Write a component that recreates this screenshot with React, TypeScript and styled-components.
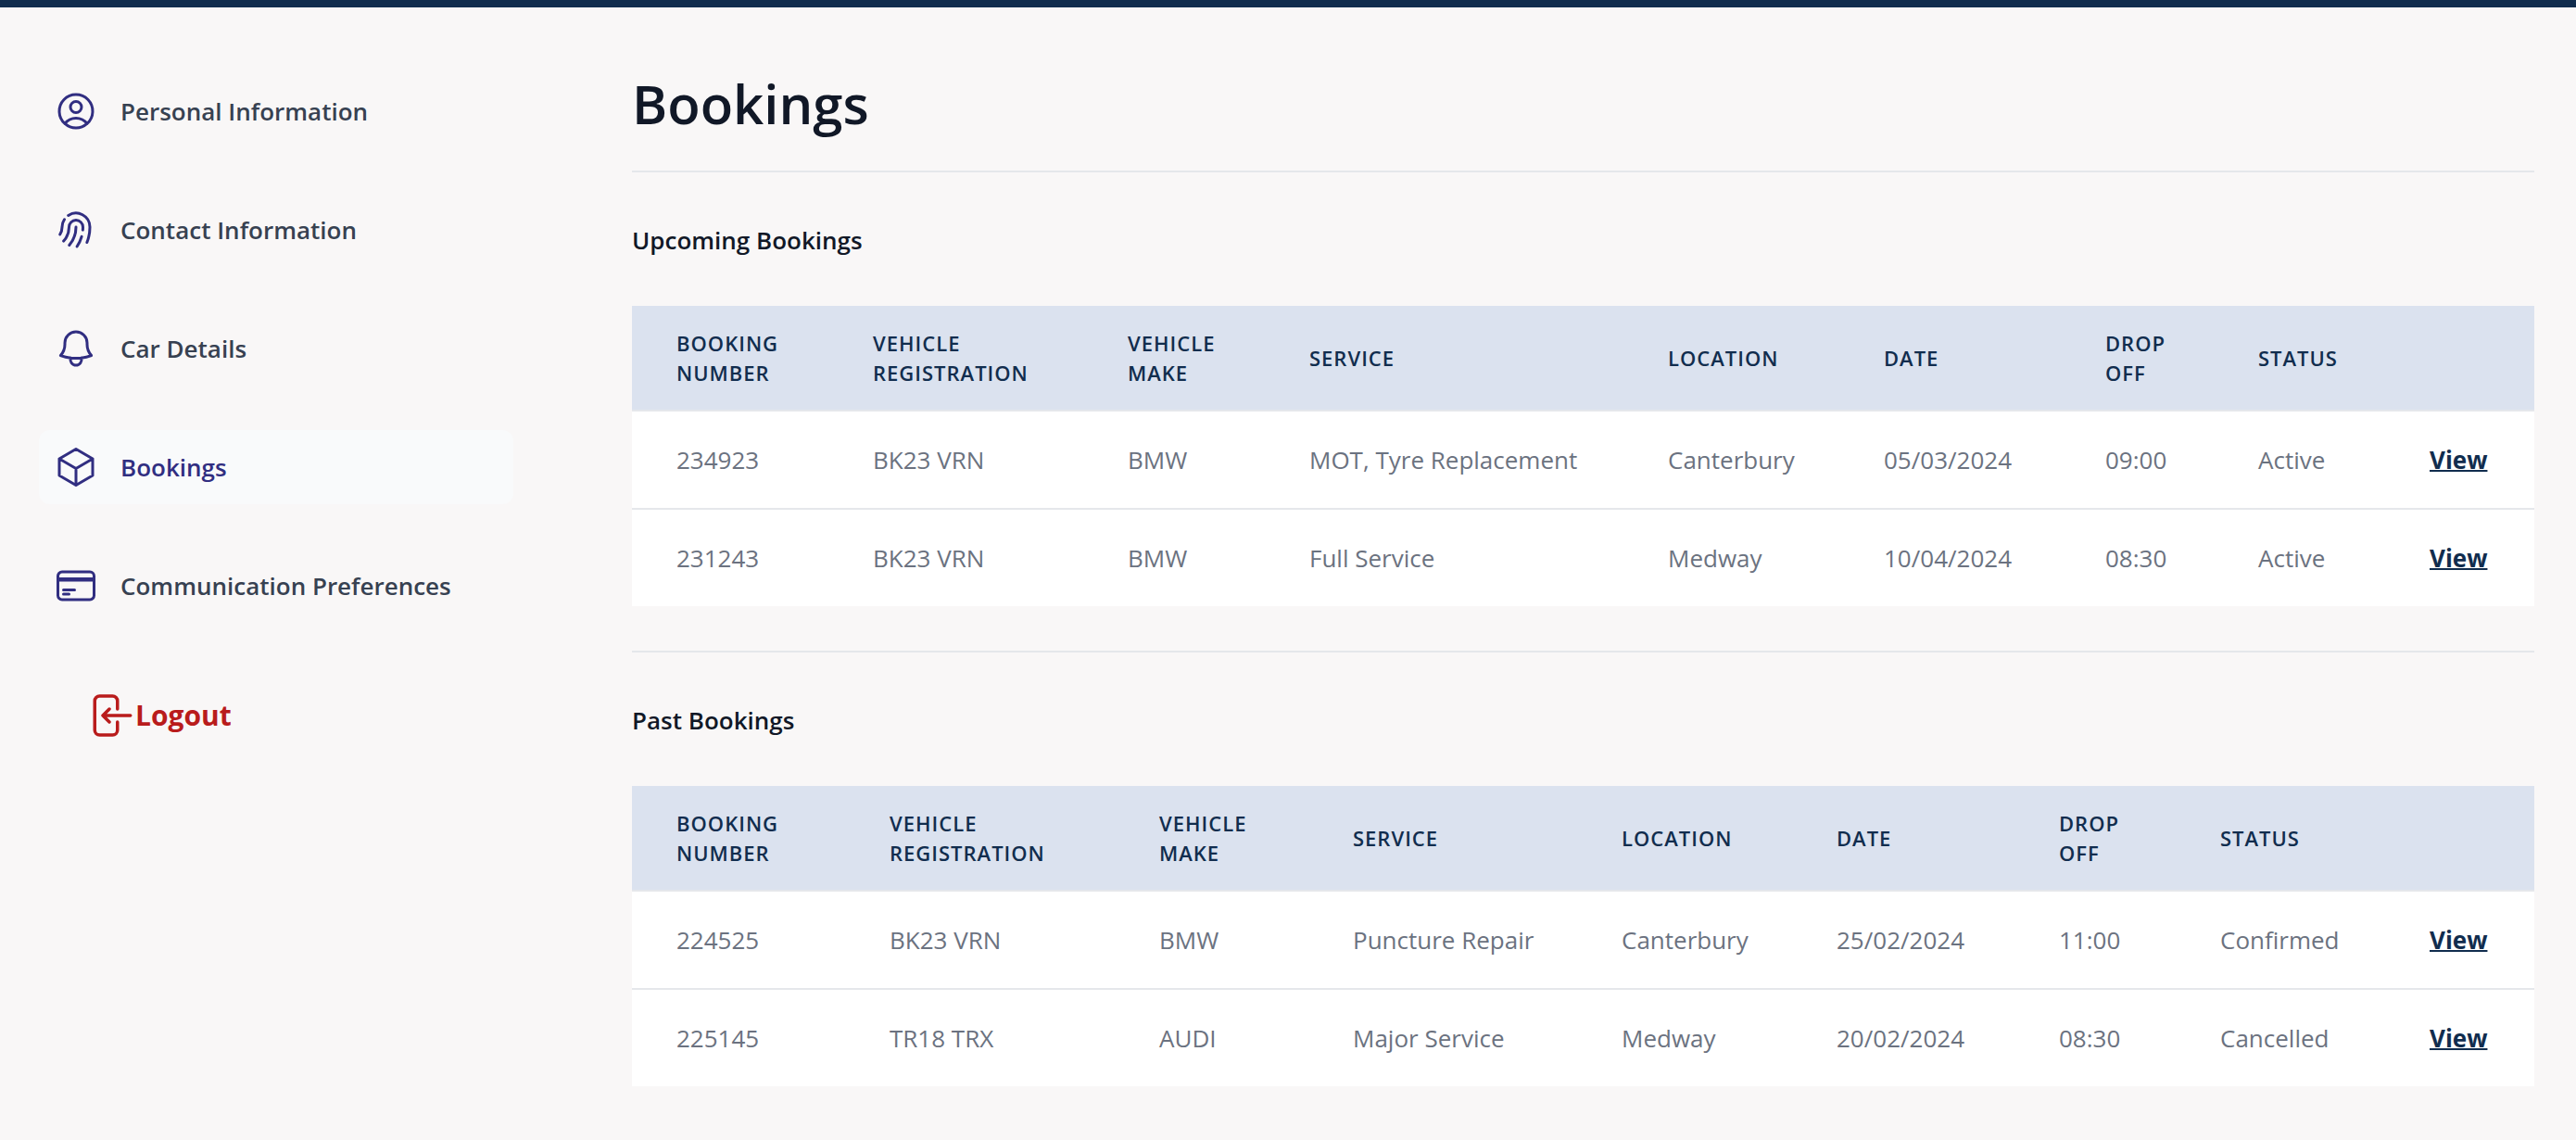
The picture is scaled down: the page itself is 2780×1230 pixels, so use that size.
import React from "react";
import styled, { createGlobalStyle } from "styled-components";

const GlobalStyle = createGlobalStyle`
  *, *::before, *::after { box-sizing: border-box; }
  body {
    margin: 0;
    background: #f9f7f7;
    color: #111827;
    font-family: "Segoe UI", "Open Sans", "Noto Sans", sans-serif;
    font-size: 26px;
    line-height: 42px;
  }
`;

const Page = styled.div`
  border-top: 8px solid #112d4e;
`;

const Shell = styled.div`
  display: grid;
  grid-template-columns: minmax(0, 512px) minmax(0, 1fr);
  column-gap: 128px;
  padding: 64px 45px 56px 42px;
`;

const Sidebar = styled.nav`
  display: flex;
  flex-direction: column;
  padding-top: 8px;
`;

const NavList = styled.ul`
  display: flex;
  flex-direction: column;
  gap: 48px;
  margin: 0;
  padding: 0;
  list-style: none;
`;

const NavLink = styled.a<{ $active?: boolean }>`
  display: flex;
  align-items: center;
  gap: 24px;
  padding: 16px;
  border-radius: 12px;
  background: ${(p) => (p.$active ? "#f9fafb" : "transparent")};
  color: ${(p) => (p.$active ? "#312e81" : "#374151")};
  font-weight: 600;
  line-height: 48px;
  text-decoration: none;
  white-space: nowrap;
`;

const Icon = styled.svg<{ $size: number }>`
  flex: none;
  width: ${(p) => p.$size}px;
  height: ${(p) => p.$size}px;
  fill: none;
  stroke: currentColor;
  stroke-width: 1.5;
  stroke-linecap: round;
  stroke-linejoin: round;
`;

const NavIcon = styled(Icon)`
  color: #312e81;
`;

const LogoutButton = styled.button`
  display: flex;
  align-items: center;
  align-self: flex-start;
  margin: 72px 0 0 48px;
  padding: 0;
  border: 0;
  background: none;
  color: #b91c1c;
  font: inherit;
  font-size: 30px;
  font-weight: 700;
  line-height: 56px;
  cursor: pointer;
`;

const Title = styled.h1`
  margin: 0;
  padding-bottom: 32px;
  font-size: 58px;
  font-weight: 600;
  line-height: 80px;
`;

const Section = styled.section`
  padding: 52px 0 48px;
  border-top: 2px solid #e5e7eb;
`;

const SectionTitle = styled.h2`
  margin: 0 0 50px;
  font-size: 26px;
  font-weight: 600;
  line-height: 42px;
`;

const Table = styled.table`
  width: 100%;
  table-layout: fixed;
  border-collapse: separate;
  border-spacing: 0;
  background: #ffffff;
  text-align: left;
`;

const HeadCell = styled.th`
  height: 114px;
  padding: 24px 48px;
  border-bottom: 2px solid #e5e7eb;
  background: #dbe2ef;
  color: #112d4e;
  font-size: 22px;
  font-weight: 600;
  line-height: 32px;
  letter-spacing: 1px;
  text-transform: uppercase;
`;

const Cell = styled.td`
  padding: 31px 48px;
  color: #6b7280;
  white-space: nowrap;

  tr + tr > & {
    border-top: 2px solid #e5e7eb;
  }
`;

const ViewLink = styled.a`
  color: #112d4e;
  font-weight: 700;
  text-decoration: underline;
  text-decoration-thickness: 2px;
`;

const HiddenLabel = styled.span`
  position: absolute;
  width: 1px;
  height: 1px;
  overflow: hidden;
  clip-path: inset(50%);
`;

const navItems = [
  {
    label: "Personal Information",
    path: "M17.982 18.725A7.488 7.488 0 0 0 12 15.75a7.488 7.488 0 0 0-5.982 2.975m11.963 0a9 9 0 1 0-11.963 0m11.963 0A8.966 8.966 0 0 1 12 21a8.966 8.966 0 0 1-5.982-2.275M15 9.75a3 3 0 1 1-6 0 3 3 0 0 1 6 0Z",
  },
  {
    label: "Contact Information",
    path: "M7.864 4.243A7.5 7.5 0 0 1 19.5 10.5c0 2.92-.556 5.709-1.568 8.268M5.742 6.364A7.465 7.465 0 0 0 4.5 10.5a7.464 7.464 0 0 1-1.15 3.993m1.989 3.559A11.209 11.209 0 0 0 8.25 10.5a3.75 3.75 0 1 1 7.5 0c0 .527-.021 1.049-.064 1.565M12 10.5a14.94 14.94 0 0 1-3.6 9.75m6.633-4.596a18.666 18.666 0 0 1-2.485 5.33",
  },
  {
    label: "Car Details",
    path: "M14.857 17.082a23.848 23.848 0 0 0 5.454-1.31A8.967 8.967 0 0 1 18 9.75V9A6 6 0 0 0 6 9v.75a8.967 8.967 0 0 1-2.312 6.022c1.733.64 3.56 1.085 5.455 1.31m5.714 0a24.255 24.255 0 0 1-5.714 0m5.714 0a3 3 0 1 1-5.714 0",
  },
  {
    label: "Bookings",
    active: true,
    path: "m21 7.5-9-5.25L3 7.5m18 0-9 5.25m9-5.25v9l-9 5.25M3 7.5l9 5.25M3 7.5v9l9 5.25m0-9v9",
  },
  {
    label: "Communication Preferences",
    path: "M2.25 8.25h19.5M2.25 9h19.5m-16.5 5.25h6m-6 2.25h3m-3.75 3h15a2.25 2.25 0 0 0 2.25-2.25V6.75A2.25 2.25 0 0 0 19.5 4.5h-15a2.25 2.25 0 0 0-2.25 2.25v10.5A2.25 2.25 0 0 0 4.5 19.5Z",
  },
];

const columns = [
  "Booking Number",
  "Vehicle Registration",
  "Vehicle Make",
  "Service",
  "Location",
  "Date",
  "Drop Off",
  "Status",
];

interface BookingGroup {
  title: string;
  widths: number[];
  rows: string[][];
}

const groups: BookingGroup[] = [
  {
    title: "Upcoming Bookings",
    widths: [212, 275, 196, 387, 233, 239, 165, 185, 161],
    rows: [
      ["234923", "BK23 VRN", "BMW", "MOT, Tyre Replacement", "Canterbury", "05/03/2024", "09:00", "Active"],
      ["231243", "BK23 VRN", "BMW", "Full Service", "Medway", "10/04/2024", "08:30", "Active"],
    ],
  },
  {
    title: "Past Bookings",
    widths: [230, 291, 209, 290, 232, 240, 174, 226, 161],
    rows: [
      ["224525", "BK23 VRN", "BMW", "Puncture Repair", "Canterbury", "25/02/2024", "11:00", "Confirmed"],
      ["225145", "TR18 TRX", "AUDI", "Major Service", "Medway", "20/02/2024", "08:30", "Cancelled"],
    ],
  },
];

const Col = styled.col<{ $width: number }>`
  width: ${(p) => p.$width}px;
`;

function BookingTable({ title, widths, rows }: BookingGroup) {
  return (
    <Section>
      <SectionTitle>{title}</SectionTitle>
      <Table aria-label={title}>
        <colgroup>
          {widths.map((w, i) => (
            <Col key={i} $width={w} />
          ))}
        </colgroup>
        <thead>
          <tr>
            {columns.map((c) => (
              <HeadCell key={c} scope="col">
                {c}
              </HeadCell>
            ))}
            <HeadCell as="td" />
          </tr>
        </thead>
        <tbody>
          {rows.map((row) => (
            <tr key={row[0]}>
              {row.map((value, i) => (
                <Cell key={i}>{value}</Cell>
              ))}
              <Cell>
                <ViewLink href="#view">View</ViewLink>
              </Cell>
            </tr>
          ))}
        </tbody>
      </Table>
    </Section>
  );
}

export default function App() {
  return (
    <Page>
      <GlobalStyle />
      <Shell>
        <Sidebar aria-label="Account">
          <NavList>
            {navItems.map((item) => (
              <li key={item.label}>
                <NavLink href="#section" $active={item.active} aria-current={item.active ? "page" : undefined}>
                  <NavIcon $size={48} viewBox="0 0 24 24" aria-hidden="true">
                    <path d={item.path} />
                  </NavIcon>
                  {item.label}
                </NavLink>
              </li>
            ))}
          </NavList>
          <LogoutButton type="button">
            <Icon $size={56} viewBox="0 0 24 24" aria-hidden="true">
              <path d="M15.75 9V5.25A2.25 2.25 0 0 0 13.5 3h-6a2.25 2.25 0 0 0-2.25 2.25v13.5A2.25 2.25 0 0 0 7.5 21h6a2.25 2.25 0 0 0 2.25-2.25V15M12 9l-3 3m0 0 3 3m-3-3h12.75" />
            </Icon>
            Logout
          </LogoutButton>
        </Sidebar>
        <main>
          <Title>Bookings</Title>
          {groups.map((g) => (
            <BookingTable key={g.title} {...g} />
          ))}
        </main>
      </Shell>
    </Page>
  );
}
